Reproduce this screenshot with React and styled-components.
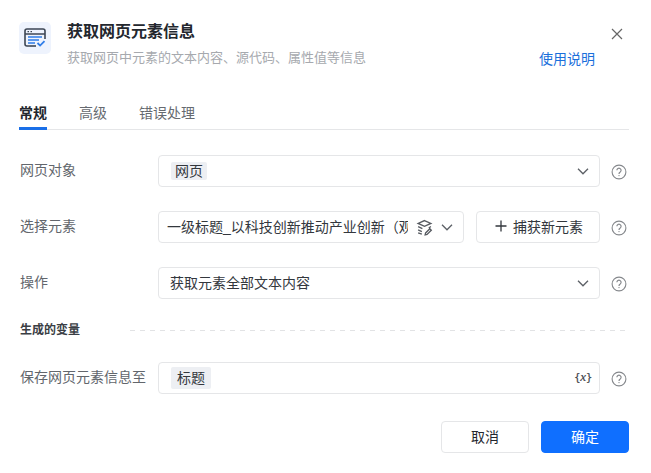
import React from "react";
import styled, { createGlobalStyle } from "styled-components";

const Global = createGlobalStyle`
  html, body { margin: 0; padding: 0; background: #fff; }
  body { font-family: "Liberation Sans", "Noto Sans CJK SC", sans-serif; color: #23272e; }
  * { box-sizing: border-box; }
`;

const Dialog = styled.div`
  width: 651px; height: 473px; padding: 22px 22px 20px 20px; display: flex; flex-direction: column; background: #fff; overflow: hidden;
  & > * { flex-shrink: 0; }
`;
const Header = styled.header`display: flex; height: 64px; margin-left: -1px;`;
const AppIcon = styled.div`
  width: 32px; height: 32px; border-radius: 5px; background: #eef3fd; display: flex; align-items: center; justify-content: center; flex: none;
`;
const HeadText = styled.div`flex: 1; margin-left: 16px; min-width: 0;`;
const Title = styled.h1`margin: 0; font-size: 16px; line-height: 20px; font-weight: 700; color: #23272e;`;
const Sub = styled.p`margin: 6px 0 0; font-size: 13px; line-height: 20px; color: #a6a9ae;`;
const HeadRight = styled.div`display: flex; flex-direction: column; align-items: flex-end; width: 100px;`;
const Close = styled.button`
  border: 0; background: none; padding: 0; width: 12px; height: 12px; margin: 6px 6px 0 0; color: #666; display: flex; cursor: pointer;
`;
const HelpLink = styled.a`margin: 9px 34px 0 0; font-size: 14px; line-height: 20px; color: #1a6fdb;`;

const Tabs = styled.nav`
  display: flex; gap: 32px; margin: 16px 0 0 -1px; height: 28px; border-bottom: 1px solid #e5e6e8;
`;
const Tab = styled.div`
  font-size: 14px; line-height: 20px; height: 28px; padding-top: 1px; font-weight: ${p => (p.$active ? 700 : 400)};
  color: ${p => (p.$active ? "#23272e" : "#666a70")};
  border-bottom: ${p => (p.$active ? "3px solid #1a6fe8" : "none")};
`;

const Form = styled.div`display: flex; flex-direction: column; gap: 24px; margin-top: 25px;`;
const Row = styled.div`display: grid; grid-template-columns: 138px 442px 29px; align-items: center; height: 32px;`;
const Label = styled.label`font-size: 14px; line-height: 20px; color: #62666c; margin-top: -3px;`;
const Field = styled.div`
  height: 32px; border: 1px solid #e5e6e8; border-radius: 4px; display: flex; align-items: center;
  padding: 0 ${p => p.$pr ?? 10}px 0 ${p => p.$pl ?? 12}px; font-size: 14px; color: #33373d; min-width: 0; background: #fff;
`;
const FieldText = styled.span`flex: 1; white-space: nowrap; overflow: hidden; min-width: 0; margin-top: -2px;`;
const Chip = styled.span`
  background: #edeff3; border-radius: 2px; padding: 0 ${p => p.$px ?? 4}px; line-height: ${p => p.$h ?? 18}px; height: ${p => p.$h ?? 18}px; font-size: 14px; color: #33373d;
`;
const Spacer = styled.span`flex: 1;`;
const Split = styled.div`display: grid; grid-template-columns: 306px 124px; gap: 12px;`;
const CaptureBtn = styled.button`
  height: 32px; border: 1px solid #e5e6e8; border-radius: 4px; background: #fff; font: inherit; font-size: 14px; color: #33373d;
  display: flex; align-items: center; justify-content: center; gap: 6px; padding: 0 0 2px 2px;
`;
const LayerIcon = styled.svg`margin: 0 8px 0 8px; flex: none;`;
const HelpIcon = styled.span`justify-self: end; margin-right: 2px; display: flex; color: #85888c; margin-top: 2px;`;
const Section = styled.div`display: flex; align-items: center; gap: 50px; height: 20px; margin: -3px 0 -2px;`;
const SectionName = styled.span`font-size: 12px; font-weight: 700; color: #3a3e44; line-height: 20px; flex: none;`;
const Dashes = styled.span`
  flex: 1; height: 1px; margin-right: 2px;
  background: repeating-linear-gradient(90deg, #e2e3e5 0 5px, transparent 5px 10px);
`;
const VarMark = styled.span`
  font-family: "DejaVu Sans", sans-serif; font-size: 10.5px; font-weight: 400; color: #3f4349; letter-spacing: -0.4px; margin-top: -3px;
  -webkit-text-stroke: 0.2px #3f4349;
`;
const VarX = styled.i`font-family: "Liberation Serif", serif; font-size: 13px;`;
const Footer = styled.footer`display: flex; justify-content: flex-end; gap: 12px; margin-top: 27px;`;
const FootBtn = styled.button`
  width: 88px; height: 32px; border-radius: 4px; font: inherit; font-size: 14px; padding: 0 0 2px;
  border: 1px solid ${p => (p.$primary ? "#0f6fff" : "#e5e6e8")};
  background: ${p => (p.$primary ? "#0f6fff" : "#fff")};
  color: ${p => (p.$primary ? "#fff" : "#23272e")};
`;

const Chevron = () => (
  <svg width="12" height="12" viewBox="0 0 12 12" fill="none" stroke="#5c6066" strokeWidth="1.3"><path d="M1 3.8l5 5 5-5" /></svg>
);
const Help = () => (
  <HelpIcon>
    <svg width="16" height="16" viewBox="0 0 16 16" fill="none" stroke="currentColor" strokeWidth="1.1">
      <circle cx="8" cy="8" r="6.9" />
      <path d="M5.9 6.3a2.1 2.1 0 1 1 3.3 1.7c-.8.5-1.2 1-1.2 1.9" strokeWidth="1.2" />
      <circle cx="8" cy="11.6" r=".7" fill="currentColor" stroke="none" />
    </svg>
  </HelpIcon>
);

export default function App() {
  return (
    <Dialog>
      <Global />
      <Header>
        <AppIcon>
          <svg width="22" height="20" viewBox="0 0 22 20" fill="none">
            <path d="M6 18H3a2 2 0 0 1-2-2V3a2 2 0 0 1 2-2h16a2 2 0 0 1 2 2v8" stroke="#3d4654" strokeWidth="1.6" />
            <path d="M1 6h20" stroke="#3d4654" strokeWidth="1.5" />
            <path d="M3.5 3.6h1.5M6.5 3.6h1.5" stroke="#3d4654" strokeWidth="1.2" />
            <path d="M4 9h14M4 12h11M4 15h7" stroke="#2f7de8" strokeWidth="1.7" />
            <path d="M6 18h6" stroke="#3d4654" strokeWidth="1.6" />
            <path d="M13.5 15l2.6 2.6 4.4-4.4" stroke="#2f7de8" strokeWidth="1.8" />
          </svg>
        </AppIcon>
        <HeadText>
          <Title>获取网页元素信息</Title>
          <Sub>获取网页中元素的文本内容、源代码、属性值等信息</Sub>
        </HeadText>
        <HeadRight>
          <Close aria-label="关闭">
            <svg width="12" height="12" viewBox="0 0 12 12" stroke="currentColor" strokeWidth="1.2"><path d="M1 1l10 10M11 1L1 11" /></svg>
          </Close>
          <HelpLink>使用说明</HelpLink>
        </HeadRight>
      </Header>
      <Tabs>
        <Tab $active>常规</Tab>
        <Tab>高级</Tab>
        <Tab>错误处理</Tab>
      </Tabs>
      <Form>
        <Row>
          <Label>网页对象</Label>
          <Field><Chip>网页</Chip><Spacer /><Chevron /></Field>
          <Help />
        </Row>
        <Row>
          <Label>选择元素</Label>
          <Split>
            <Field $pl={8}>
              <FieldText>一级标题_以科技创新推动产业创新（观</FieldText>
              <LayerIcon width="17" height="17" viewBox="0 0 16 16" fill="none" stroke="#565a60" strokeWidth="1.25">
                <path d="M8 1.5l6 2.7-6 2.7-6-2.7z" />
                <path d="M2 7.2l4 1.8M2 10.2l3.5 1.6M2 13l3.5 1.3" />
                <path d="M9 13.2l4-4 1.4 1.4-4 4-1.8.4zM14 7l-2 1.5" />
              </LayerIcon>
              <Chevron />
            </Field>
            <CaptureBtn>
              <svg width="12" height="12" viewBox="0 0 12 12" stroke="#33373d" strokeWidth="1.3"><path d="M6 .5v11M.5 6h11" /></svg>
              捕获新元素
            </CaptureBtn>
          </Split>
          <Help />
        </Row>
        <Row>
          <Label>操作</Label>
          <Field $pl={11}><FieldText>获取元素全部文本内容</FieldText><Chevron /></Field>
          <Help />
        </Row>
        <Section>
          <SectionName>生成的变量</SectionName>
          <Dashes />
        </Section>
        <Row>
          <Label>保存网页元素信息至</Label>
          <Field $pr={7}><Chip $px={6} $h={22}>标题</Chip><Spacer /><VarMark>{"{"}<VarX>x</VarX>{"}"}</VarMark></Field>
          <Help />
        </Row>
      </Form>
      <Footer>
        <FootBtn>取消</FootBtn>
        <FootBtn $primary>确定</FootBtn>
      </Footer>
    </Dialog>
  );
}
